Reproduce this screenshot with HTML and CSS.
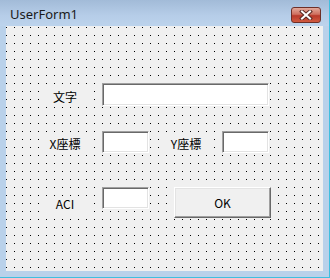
FILE: index.html
```html
<!DOCTYPE html>
<html lang="ja">
<head>
    <meta charset="UTF-8">
    <meta name="viewport" content="width=device-width, initial-scale=1.0">
    <title>UserForm1</title>
    <link rel="stylesheet" href="styles.css">
</head>
<body>
    <div class="window">
        <div class="titlebar">
            <span class="title">UserForm1</span>
            <div class="close-btn">
                <svg width="14" height="10" viewBox="0 0 14 10">
                    <path d="M3 1.5 L11 8.5 M11 1.5 L3 8.5" stroke="#5a2a24" stroke-width="4" stroke-linecap="square" fill="none"/>
                    <path d="M3 1.5 L11 8.5 M11 1.5 L3 8.5" stroke="#ffffff" stroke-width="2" stroke-linecap="square" fill="none"/>
                </svg>
            </div>
        </div>
        <div class="frame">
            <div class="client">
                <!-- 文字 -->
                <div class="row row-1">
                    <label class="lbl lbl-1">文字</label>
                    <div class="textbox wide"></div>
                </div>

                <!-- 座標 -->
                <div class="row row-2">
                    <label class="lbl lbl-2">X座標</label>
                    <div class="textbox small"></div>
                    <label class="lbl lbl-2 lbl-y">Y座標</label>
                    <div class="textbox small"></div>
                </div>

                <!-- ACI -->
                <div class="row row-3">
                    <label class="lbl lbl-3">ACI</label>
                    <div class="textbox small"></div>
                    <button class="ok-btn">OK</button>
                </div>
            </div>
        </div>
    </div>
</body>
</html>
```

FILE: styles.css
```css
html, body {
    margin: 0;
    padding: 0;
}
body {
    width: 330px;
    height: 278px;
    overflow: hidden;
    font-family: "Noto Sans CJK JP", "Noto Sans", sans-serif;
}
.window {
    width: 329px;
    height: 277px;
    border-right: 1px solid #3fbfdf;
    border-bottom: 1px solid #3fbfdf;
    background-color: #b9d1ea;
}
.titlebar {
    height: 26px;
    display: flex;
    justify-content: space-between;
    align-items: flex-start;
    padding: 0 8px 0 10px;
    background: linear-gradient(#a2bbd8, #b6cde8 60%, #bcd3ec);
}
.title {
    font-family: "Noto Sans", "Open Sans", sans-serif;
    font-size: 13px;
    line-height: 30px;
    color: #1a1a1a;
    margin-top: -1px;
}
.close-btn {
    width: 28px;
    height: 14px;
    margin-top: 7px;
    border: 1px solid #6e2f27;
    border-radius: 3px;
    background: linear-gradient(#e2a99b, #cf6f5e 45%, #b9392a 55%, #d05a40);
    display: flex;
    align-items: center;
    justify-content: center;
}
.frame {
    padding: 0 6px 6px 6px;
}
.client {
    height: 245px;
    box-sizing: border-box;
    padding-top: 57px;
    background-color: #f0f0f0;
    background-image:
        linear-gradient(to right, transparent 1px, #f0f0f0 1px),
        linear-gradient(to bottom, #000 1px, #f0f0f0 1px);
    background-size: 8px 8px;
    background-position: 0 1px;
}
.row {
    display: flex;
    align-items: flex-start;
    padding-left: 35px;
}
.row-2 {
    margin-top: 25px;
}
.row-3 {
    margin-top: 34px;
}
.lbl {
    width: 48px;
    margin-right: 13px;
    text-align: center;
    font-size: 12px;
    line-height: 16px;
    color: #000;
    background-color: #f0f0f0;
}
.lbl-1 {
    margin-top: 6px;
}
.lbl-2 {
    margin-top: 5px;
}
.lbl-3 {
    margin-top: 9px;
}
.lbl-y {
    margin-left: 13px;
    margin-right: 12px;
}
.textbox {
    box-sizing: border-box;
    height: 22px;
    background-color: #fff;
    border: 1px solid;
    border-color: #a0a0a0 #fff #fff #a0a0a0;
    box-shadow: inset 1px 1px #696969, inset -1px -1px #e3e3e3;
}
.wide {
    width: 167px;
    height: 23px;
}
.small {
    width: 47px;
}
.ok-btn {
    box-sizing: border-box;
    width: 97px;
    height: 31px;
    margin-left: 25px;
    padding: 0;
    font-family: "Noto Sans CJK JP", "Noto Sans", sans-serif;
    font-size: 12px;
    color: #000;
    background-color: #f0f0f0;
    border: 1px solid;
    border-color: #fff #696969 #696969 #fff;
    box-shadow: inset -1px -1px #a0a0a0, inset 1px 1px #e3e3e3;
}
```
